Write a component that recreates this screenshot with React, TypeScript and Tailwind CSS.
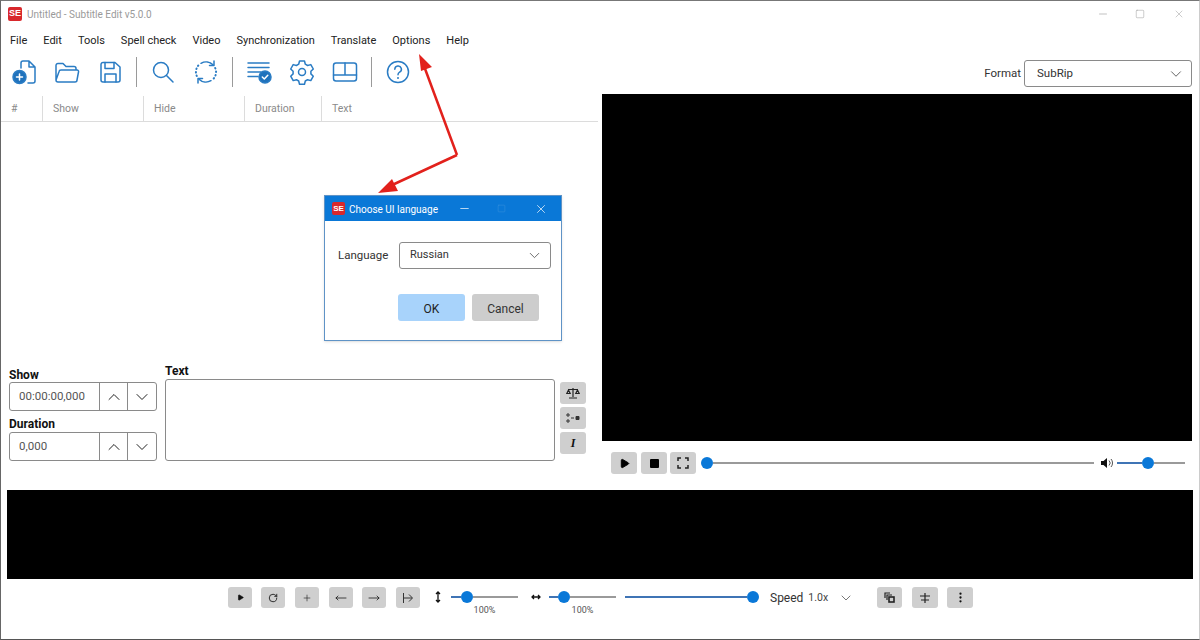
import React from "react";
import { ChevronDown, ChevronUp, Minus, Plus, Square, X, Play, RotateCw, MoveLeft, MoveRight, MoreVertical } from "lucide-react";

const FONT = "font-['Roboto',sans-serif]";
const MENU = ["File", "Edit", "Tools", "Spell check", "Video", "Synchronization", "Translate", "Options", "Help"];

// red square with the two letters, used on both title bars
const Logo = ({ small }: { small?: boolean }) => (
  <div className={`flex items-center justify-center rounded-[2px] bg-[#d8282c] font-['Liberation_Sans',sans-serif] font-bold text-white ${small ? "h-[13px] w-[13px] text-[8px]" : "h-[14px] w-[14px] text-[9px]"}`}>
    SE
  </div>
);

const ToolIcon = ({ children }: { children: React.ReactNode }) => (
  <button className="flex h-[30px] w-[43px] items-center justify-center">
    <svg width="26" height="26" viewBox="0 0 26 26" fill="none" stroke="#2a7cc4" strokeWidth="1.5" strokeLinecap="round" strokeLinejoin="round">
      {children}
    </svg>
  </button>
);

const Sep = () => <div className="ml-[5px] mr-[4px] h-[30px] w-px bg-[#9a9a9a]" />;

const GrayButton = ({ className, children }: { className: string; children: React.ReactNode }) => (
  <button className={`flex items-center justify-center rounded-[3px] bg-[#cfcfcf] text-[#111] ${className}`}>{children}</button>
);

const Slider = ({ left, right, className }: { left: number; right: number; className?: string }) => (
  <div className={`flex items-center ${className ?? ""}`}>
    <div className="h-[2px] bg-[#3f74b5]" style={{ width: left }} />
    <div className="h-[12px] w-[12px] shrink-0 rounded-full bg-[#0a78d8]" />
    <div className="h-[2px] bg-[#9a9a9a]" style={{ width: right }} />
  </div>
);

const Spinner = ({ value, className }: { value: string; className?: string }) => (
  <div className={`flex h-[29px] w-[148px] items-stretch rounded-[3px] border border-[#8a8a8a] ${className ?? ""}`}>
    <div className="flex w-[89px] items-center pl-[9px] text-[11.5px] text-[#555]">{value}</div>
    <div className="flex w-[28px] items-center justify-center border-l border-[#8a8a8a]">
      <ChevronUp size={20} strokeWidth={1.2} color="#222" />
    </div>
    <div className="flex flex-1 items-center justify-center border-l border-[#8a8a8a]">
      <ChevronDown size={20} strokeWidth={1.2} color="#222" />
    </div>
  </div>
);

const Percent = () => <div className="mt-[2px] text-center text-[9px] leading-[10px] text-[#555]">100%</div>;

export default function App() {
  return (
    <div className={`relative flex h-[640px] w-[1200px] flex-col overflow-hidden border-b border-l border-t border-r border-b-[#555] border-l-[#666] border-r-[#ccc] border-t-[#777] bg-white ${FONT}`}>
      {/* Title bar */}
      <div className="flex h-[25px] shrink-0 items-center pl-[7px]">
        <Logo />
        <span className="ml-[5px] mt-[1px] text-[10px] text-[#9a9a9a]">Untitled - Subtitle Edit v5.0.0</span>
        <div className="ml-auto flex items-center text-[#999]">
          <Minus size={12} strokeWidth={1.2} className="mr-[26px]" />
          <Square size={10} strokeWidth={1.2} className="mr-[28px]" />
          <X size={12} strokeWidth={1} className="mr-[14px]" />
        </div>
      </div>

      {/* Menu */}
      <div className="flex h-[28px] shrink-0 items-center gap-[16px] pl-[9px] pt-[2px] text-[11px] text-[#222]">
        {MENU.map((m) => (
          <span key={m}>{m}</span>
        ))}
      </div>

      <div className="flex h-[431px] shrink-0">
        {/* Left column */}
        <div className="flex w-[597px] shrink-0 flex-col">
          <div className="mt-[3px] flex items-center">
            <div className="w-px" />
            <ToolIcon>
              <path d="M10 9V4a2 2 0 0 1 2-2h6l6 6v14a2 2 0 0 1-2 2h-5M18 2v6h6" />
              <circle cx="8.500" cy="18" r="6.500" fill="#1f72bc" />
              <path d="M8.500 15v6M5.500 18h6" stroke="#fff" />
            </ToolIcon>
            <ToolIcon>
              <path d="M2 21V6.500a2 2 0 0 1 2-2h5l3 3h8a2 2 0 0 1 2 2v1.500M2 21a2 2 0 0 0 2 2h17a2 2 0 0 0 2-2l1.500-8a1.500 1.500 0 0 0-1.500-2H7a2 2 0 0 0-2 1.700z" />
            </ToolIcon>
            <ToolIcon>
              <path d="M6 3.500h12l5 4.500v13a2 2 0 0 1-2 2H6a2 2 0 0 1-2-2V5.500a2 2 0 0 1 2-2z" />
              <path d="M8 3.500v6h9v-6M8 23v-8h11v8" />
            </ToolIcon>
            <Sep />
            <ToolIcon>
              <circle cx="11" cy="11" r="7.500" />
              <path d="M16.500 16.500 23 23" />
            </ToolIcon>
            <ToolIcon>
              <path d="M8 4.300a10 10 0 0 1 12 1.500" />
              <path d="M21 2v4.500h-4.500" />
              <path d="M18 21.700a10 10 0 0 1-12-1.500" />
              <path d="M5 24v-4.500h4.500" />
              <path d="M5.300 6.500A10 10 0 0 0 3.800 17M20.700 19.500A10 10 0 0 0 22.200 9" strokeDasharray="0.500 3" strokeWidth="2" />
            </ToolIcon>
            <Sep />
            <ToolIcon>
              <path d="M2 4h21M2 8.500h21M2 13h13M2 17.500h10" />
              <circle cx="19" cy="18" r="6" fill="#1f72bc" />
              <path d="m16.300 18 2 2 3.500-3.800" stroke="#fff" />
            </ToolIcon>
            <ToolIcon>
              <path d="M10.500 2h5l.8 3.200 2.300 1.300 3.200-.9 2.500 4.400-2.400 2.300v2.600l2.400 2.300-2.500 4.400-3.200-.9-2.300 1.300-.8 3.200h-5l-.8-3.200-2.300-1.300-3.200.9-2.500-4.400 2.400-2.300v-2.600L1.700 10l2.500-4.400 3.200.9 2.300-1.300z" />
              <circle cx="13" cy="13" r="3.500" />
            </ToolIcon>
            <ToolIcon>
              <rect x="1.500" y="4" width="23" height="18" rx="2.500" />
              <path d="M1.500 16h23M13 4v12" />
            </ToolIcon>
            <Sep />
            <ToolIcon>
              <circle cx="13" cy="13" r="10.500" />
              <path d="M9.800 10.200a3.300 3.300 0 1 1 4.800 3c-1 .6-1.600 1.200-1.600 2.500" />
              <path d="M13 19h.01" strokeWidth="2" />
            </ToolIcon>
          </div>

          {/* Subtitle grid header */}
          <div className="mt-[9px] flex h-[26px] items-center border-b border-[#dcdcdc] text-[10.5px] text-[#8a8a8a]">
            <div className="flex h-full w-[41px] items-center pl-[10px]">#</div>
            <div className="flex h-full w-[101px] items-center border-l border-[#dcdcdc] pl-[10px]">Show</div>
            <div className="flex h-full w-[101px] items-center border-l border-[#dcdcdc] pl-[10px]">Hide</div>
            <div className="flex h-full w-[77px] items-center border-l border-[#dcdcdc] pl-[10px]">Duration</div>
            <div className="flex h-full flex-1 items-center border-l border-[#dcdcdc] pl-[10px]">Text</div>
          </div>

          {/* Edit box */}
          <div className="mt-auto mb-[24px] flex items-start pl-[8px]">
            <div className="mt-[7px] flex w-[156px] shrink-0 flex-col">
              <div className="pt-[1px] text-[12px] font-bold leading-[15px] text-[#111]">Show</div>
              <Spinner value="00:00:00,000" className="-mt-[1px]" />
              <div className="mt-[5px] text-[12px] font-bold leading-[16px] text-[#111]">Duration</div>
              <Spinner value="0,000" />
            </div>
            <div className="mt-[4px] flex w-[390px] shrink-0 flex-col">
              <div className="h-[14px] text-[12px] font-bold leading-[14px] text-[#111]">Text</div>
              <div className="mt-[1px] h-[82px] rounded-[3px] border border-[#8a8a8a]" />
            </div>
            <div className="ml-[5px] mt-[22px] flex flex-col gap-[3px]">
              <GrayButton className="h-[22px] w-[26px]">
                <svg width="14" height="12" viewBox="0 0 14 12" fill="none" stroke="#222" strokeWidth="1.200">
                  <path d="M7 1v9M3 11h8M2 2.500h10M2.500 3 .800 6.500h3.400zM11.500 3 9.800 6.500h3.400z" />
                </svg>
              </GrayButton>
              <GrayButton className="h-[22px] w-[26px]">
                <svg width="14" height="10" viewBox="0 0 14 10" fill="none" stroke="#333" strokeWidth="1">
                  <path d="M1 1h2v2H1zM1 7h2v2H1zM5 5h3" />
                  <path d="M10 3.500h3v3h-3z" fill="#333" />
                </svg>
              </GrayButton>
              <GrayButton className="h-[22px] w-[26px] font-['Liberation_Serif',serif] text-[12px] font-bold italic">I</GrayButton>
            </div>
          </div>
        </div>

        {/* Right column */}
        <div className="flex flex-1 flex-col pl-[4px] pr-[7px]">
          <div className="mt-[6px] flex h-[27px] items-center justify-end">
            <span className="mr-[3px] text-[11.5px] text-[#333]">Format</span>
            <div className="flex h-[27px] w-[168px] items-center justify-between rounded-[3px] border border-[#8a8a8a] pl-[12px] pr-[6px] text-[11.5px] text-[#333]">
              SubRip
              <ChevronDown size={18} strokeWidth={1.2} color="#555" />
            </div>
          </div>
          <div className="mt-[7px] h-[347px] bg-black" />
          <div className="mt-[11px] flex items-center pl-[9px]">
            <GrayButton className="h-[22px] w-[26px]"><Play size={11} fill="#000" color="#000" /></GrayButton>
            <GrayButton className="ml-[4px] h-[22px] w-[26px]"><div className="h-[9px] w-[9px] rounded-[1px] bg-black" /></GrayButton>
            <GrayButton className="ml-[3px] h-[22px] w-[26px]">
              <svg width="12" height="12" viewBox="0 0 12 12" fill="none" stroke="#222" strokeWidth="1.500">
                <path d="M1 4V1h3M8 1h3v3M11 8v3H8M4 11H1V8" />
              </svg>
            </GrayButton>
            <Slider left={0} right={381} className="ml-[5px]" />
            <svg width="14" height="12" viewBox="0 0 14 12" className="ml-[6px]">
              <path d="M1 4h2.500L7 1v10L3.500 8H1z" fill="#111" />
              <path d="M9 3.500a3.500 3.500 0 0 1 0 5M11 2a6 6 0 0 1 0 8" fill="none" stroke="#555" strokeWidth="1" />
            </svg>
            <Slider left={25} right={31} className="ml-[3px]" />
          </div>
        </div>
      </div>

      {/* Waveform */}
      <div className="mx-[6px] mt-[5px] h-[89px] shrink-0 bg-black" />

      {/* Bottom controls */}
      <div className="mt-[8px] flex items-start pl-[227px]">
        <GrayButton className="h-[21px] w-[24px]"><Play size={7} fill="#111" color="#111" /></GrayButton>
        <GrayButton className="ml-[9px] h-[21px] w-[24px]"><RotateCw size={10} strokeWidth={2} /></GrayButton>
        <GrayButton className="ml-[10px] h-[21px] w-[24px]"><Plus size={10} strokeWidth={1.500} color="#222" /></GrayButton>
        <GrayButton className="ml-[10px] h-[21px] w-[24px]"><MoveLeft size={12} strokeWidth={1.500} /></GrayButton>
        <GrayButton className="ml-[9px] h-[21px] w-[24px]"><MoveRight size={12} strokeWidth={1.500} /></GrayButton>
        <GrayButton className="ml-[10px] h-[21px] w-[24px]">
          <svg width="12" height="12" viewBox="0 0 12 12" fill="none" stroke="#333" strokeWidth="1">
            <path d="M1.500 1v10M1.500 6H10M7 2.500 10.500 6 7 9.500" />
          </svg>
        </GrayButton>
        <svg width="6" height="12" viewBox="0 0 6 12" className="ml-[15px] mt-[4px]" fill="none" stroke="#111" strokeWidth="1.300">
          <path d="M3 1v10M1 3l2-2 2 2M1 9l2 2 2-2" />
        </svg>
        <div className="ml-[10px] flex flex-col">
          <Slider left={10} right={45} className="mt-[4px]" />
          <Percent />
        </div>
        <svg width="10" height="8" viewBox="0 0 10 8" className="ml-[13px] mt-[6px]" fill="none" stroke="#111" strokeWidth="1.300">
          <path d="M1 4h8M3 2 1 4l2 2M7 2l2 2-2 2" />
        </svg>
        <div className="ml-[8px] flex flex-col">
          <Slider left={9} right={46} className="mt-[4px]" />
          <Percent />
        </div>
        <Slider left={122} right={0} className="ml-[9px] mt-[4px]" />
        <span className="ml-[11px] mt-[2px] text-[12px] text-[#333]">Speed</span>
        <span className="ml-[5px] mt-[3px] text-[10.5px] text-[#444]">1.0x</span>
        <ChevronDown size={16} strokeWidth={1.200} color="#555" className="ml-[10px] mt-[3px]" />
        <GrayButton className="ml-[23px] h-[21px] w-[25px]">
          <svg width="11" height="11" viewBox="0 0 11 11" fill="none" stroke="#222" strokeWidth="1.200">
            <path d="M1 6V1h5" />
            <path d="M3 8V3h5" />
            <rect x="5" y="5" width="5" height="5" strokeWidth="1.600" />
          </svg>
        </GrayButton>
        <GrayButton className="ml-[10px] h-[21px] w-[26px]">
          <svg width="12" height="12" viewBox="0 0 12 12" fill="none" stroke="#222" strokeWidth="1.200">
            <path d="M1 4h10M6 1v10M2 8h8" />
          </svg>
        </GrayButton>
        <GrayButton className="ml-[9px] h-[21px] w-[26px]"><MoreVertical size={13} strokeWidth={2.200} /></GrayButton>
      </div>

      {/* Dialog window */}
      <div className="absolute left-[323px] top-[194px] flex h-[146px] w-[238px] flex-col border border-[#5f93c6] bg-white shadow-sm">
        <div className="flex h-[25px] shrink-0 items-center bg-[#0a78d7] pl-[7px] text-white">
          <Logo small />
          <span className="ml-[4px] mt-[1px] text-[10px]">Choose UI language</span>
          <div className="ml-auto flex items-center">
            <Minus size={13} strokeWidth={1.300} className="mr-[26px]" />
            <Square size={9} strokeWidth={1} color="#4a9be0" className="mr-[28px]" />
            <X size={14} strokeWidth={1.200} className="mr-[13px]" />
          </div>
        </div>
        <div className="mt-[21px] flex items-center pl-[13px]">
          <span className="mt-[1px] w-[61px] text-[11.5px] text-[#333]">Language</span>
          <div className="flex h-[27px] w-[152px] items-center justify-between rounded-[3px] border border-[#8a8a8a] pl-[10px] pr-[7px] text-[11px] text-[#333]">
            <span className="-mt-[1px]">Russian</span>
            <ChevronDown size={17} strokeWidth={1.200} color="#555" />
          </div>
        </div>
        <div className="mt-[25px] flex gap-[7px] pl-[73px]">
          <button className="h-[27px] w-[67px] rounded-[3px] bg-[#a8d3fb] pt-[2px] text-[12px] text-[#222]">OK</button>
          <button className="h-[27px] w-[67px] rounded-[3px] bg-[#cdcdcd] pt-[2px] text-[12px] text-[#333]">Cancel</button>
        </div>
      </div>

      {/* Red annotation arrows */}
      <svg className="pointer-events-none absolute -left-px -top-px" width="1200" height="640" fill="none">
        <path d="M457 155 424 66M457 155 390 186" stroke="#e2211c" strokeWidth="2.500" />
        <path d="M419 54 432 67 421 71z M378 193 392 179 398 191z" fill="#e2211c" />
      </svg>
    </div>
  );
}
